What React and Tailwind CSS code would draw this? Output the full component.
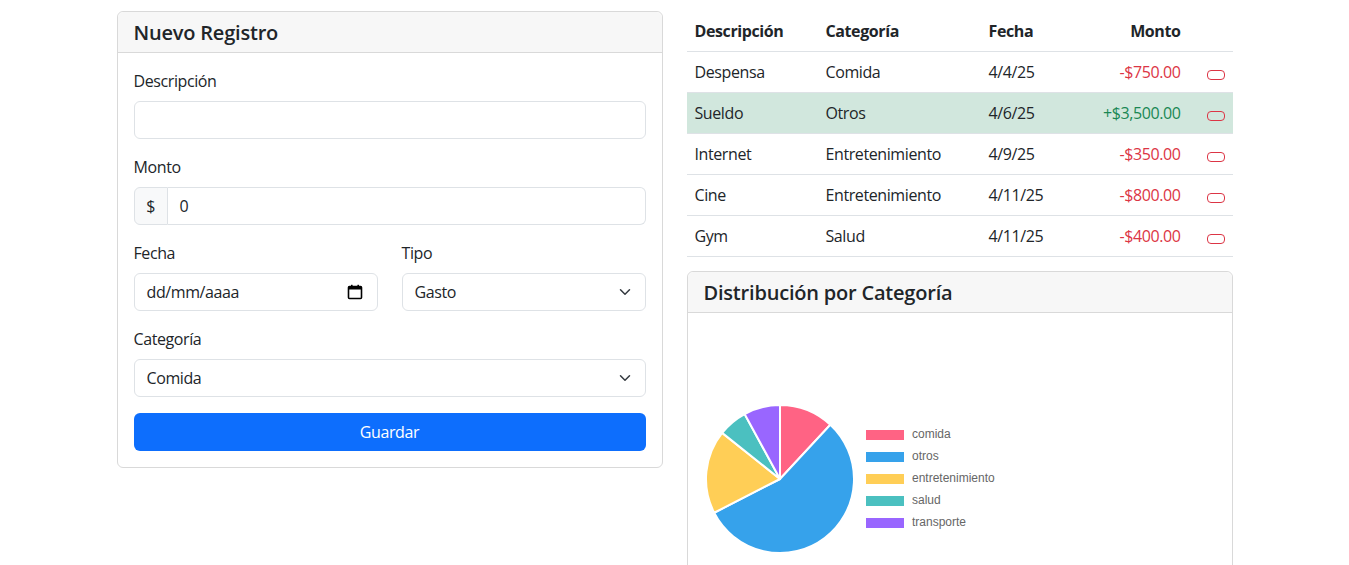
import React from 'react';

const registros = [
  { desc: 'Despensa', cat: 'Comida', fecha: '4/4/25', monto: '-$750.00', ingreso: false },
  { desc: 'Sueldo', cat: 'Otros', fecha: '4/6/25', monto: '+$3,500.00', ingreso: true },
  { desc: 'Internet', cat: 'Entretenimiento', fecha: '4/9/25', monto: '-$350.00', ingreso: false },
  { desc: 'Cine', cat: 'Entretenimiento', fecha: '4/11/25', monto: '-$800.00', ingreso: false },
  { desc: 'Gym', cat: 'Salud', fecha: '4/11/25', monto: '-$400.00', ingreso: false },
];

const categorias = [
  { name: 'comida', value: 750, color: '#ff6384' },
  { name: 'otros', value: 3500, color: '#36a2eb' },
  { name: 'entretenimiento', value: 1150, color: '#ffce56' },
  { name: 'salud', value: 400, color: '#4bc0c0' },
  { name: 'transporte', value: 500, color: '#9966ff' },
];

function Chevron() {
  return (
    <svg width="16" height="12" viewBox="0 0 16 16" className="absolute right-3 top-1/2 -translate-y-1/2">
      <path d="m2 5 6 6 6-6" fill="none" stroke="#343a40" strokeWidth="2" strokeLinecap="round" strokeLinejoin="round" />
    </svg>
  );
}

function PieChart() {
  const cx = 76;
  const cy = 150;
  const r = 74;
  const total = categorias.reduce((s, c) => s + c.value, 0);
  let start = -Math.PI / 2;
  const slices = categorias.map((c) => {
    const end = start + (c.value / total) * Math.PI * 2;
    const x1 = cx + r * Math.cos(start);
    const y1 = cy + r * Math.sin(start);
    const x2 = cx + r * Math.cos(end);
    const y2 = cy + r * Math.sin(end);
    const large = end - start > Math.PI ? 1 : 0;
    const d = `M${cx} ${cy} L${x1} ${y1} A${r} ${r} 0 ${large} 1 ${x2} ${y2} Z`;
    start = end;
    return { ...c, d };
  });

  return (
    <svg width="512" height="300" viewBox="0 0 512 300" className="block tracking-normal">
      {slices.map((s) => (
        <path key={s.name} d={s.d} fill={s.color} stroke="#fff" strokeWidth="2" strokeLinejoin="round" />
      ))}
      {categorias.map((c, i) => (
        <g key={c.name}>
          <rect x="162" y={101 + i * 22} width="38" height="10" fill={c.color} />
          <text x="208" y={106 + i * 22} dominantBaseline="middle" fontSize="12" fill="#666" fontFamily="'Liberation Sans', Arial, sans-serif">
            {c.name}
          </text>
        </g>
      ))}
    </svg>
  );
}

export default function App() {
  return (
    <div className="min-h-screen bg-white text-[#212529] text-base tracking-[-0.025em] font-['Segoe_UI','Open_Sans',sans-serif]">
      <div className="w-[1140px] mx-auto px-3 pt-[11px]">
        <div className="flex gap-6">
          {/* Formulario */}
          <div className="w-[546px] self-start border border-[#d9d9d9] rounded-md">
            <div className="px-4 pt-[9px] pb-[7px] bg-[#f7f7f7] border-b border-[#d9d9d9] rounded-t-md">
              <h5 className="text-xl font-semibold leading-6 tracking-[-0.01em]">Nuevo Registro</h5>
            </div>
            <div className="p-4">
              <div className="mb-4">
                <label className="block mb-2 leading-6">Descripción</label>
                <div className="h-[38px] border border-[#dee2e6] rounded-md" />
              </div>
              <div className="mb-4">
                <label className="block mb-2 leading-6">Monto</label>
                <div className="flex h-[38px]">
                  <span className="w-[34px] flex items-center justify-center bg-[#f8f9fa] border border-[#dee2e6] rounded-l-md">$</span>
                  <div className="flex-1 flex items-center px-3 border border-l-0 border-[#dee2e6] rounded-r-md">0</div>
                </div>
              </div>
              <div className="flex gap-6 mb-4">
                <div className="flex-1">
                  <label className="block mb-2 leading-6">Fecha</label>
                  <div className="h-[38px] flex items-center justify-between px-3 border border-[#dee2e6] rounded-md">
                    <span>dd/mm/aaaa</span>
                    <svg width="16" height="16" viewBox="0 0 16 16" className="mr-[2px]">
                      <rect x="1.5" y="2.5" width="13" height="12" rx="1" fill="none" stroke="#000" strokeWidth="1.6" />
                      <rect x="1.5" y="2.5" width="13" height="3" fill="#000" />
                      <rect x="4" y="0.8" width="1.6" height="3" fill="#000" />
                      <rect x="10.4" y="0.8" width="1.6" height="3" fill="#000" />
                    </svg>
                  </div>
                </div>
                <div className="flex-1">
                  <label className="block mb-2 leading-6">Tipo</label>
                  <div className="relative h-[38px] flex items-center px-3 border border-[#dee2e6] rounded-md">
                    Gasto
                    <Chevron />
                  </div>
                </div>
              </div>
              <div className="mb-4">
                <label className="block mb-2 leading-6">Categoría</label>
                <div className="relative h-[38px] flex items-center px-3 border border-[#dee2e6] rounded-md">
                  Comida
                  <Chevron />
                </div>
              </div>
              <button className="w-full h-[38px] bg-[#0d6efd] text-white rounded-md leading-6">Guardar</button>
            </div>
          </div>

          {/* Tabla y gráfico */}
          <div className="w-[546px]">
            <table className="w-full table-fixed border-collapse mb-[14px]">
              <thead>
                <tr className="border-b border-[#dee2e6]">
                  <th className="w-[131px] px-2 py-2 text-left font-bold leading-6">Descripción</th>
                  <th className="w-[163px] px-2 py-2 text-left font-bold leading-6">Categoría</th>
                  <th className="w-[100px] px-2 py-2 text-left font-bold leading-6">Fecha</th>
                  <th className="w-[108px] px-2 py-2 text-right font-bold leading-6">Monto</th>
                  <th className="w-[44px] px-2 py-2" />
                </tr>
              </thead>
              <tbody>
                {registros.map((r) => (
                  <tr key={r.desc} className={`border-b border-[#dee2e6] ${r.ingreso ? 'bg-[#d1e7dd]' : ''}`}>
                    <td className="px-2 py-2 leading-6">{r.desc}</td>
                    <td className="px-2 py-2 leading-6">{r.cat}</td>
                    <td className="px-2 py-2 leading-6">{r.fecha}</td>
                    <td className={`px-2 py-2 leading-6 text-right ${r.ingreso ? 'text-[#198754]' : 'text-[#dc3545]'}`}>{r.monto}</td>
                    <td className="px-2 py-2 text-right">
                      <span className="inline-block align-middle mt-[3px] w-[18px] h-[10px] border border-[#dc3545] rounded-[4px]" />
                    </td>
                  </tr>
                ))}
              </tbody>
            </table>

            <div className="border border-[#d9d9d9] rounded-md">
              <div className="px-4 pt-[9px] pb-[7px] bg-[#f7f7f7] border-b border-[#d9d9d9] rounded-t-md">
                <h5 className="text-xl font-semibold leading-6 tracking-[-0.01em]">Distribución por Categoría</h5>
              </div>
              <div className="p-4">
                <PieChart />
              </div>
            </div>
          </div>
        </div>
      </div>
    </div>
  );
}
